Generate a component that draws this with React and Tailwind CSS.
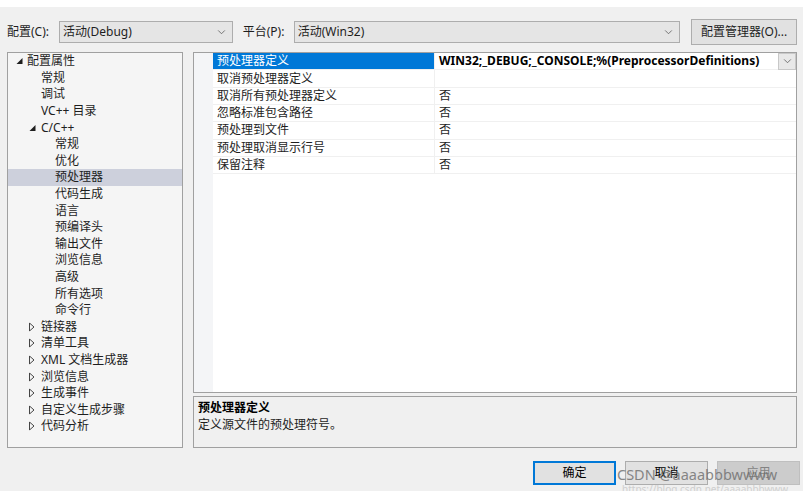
import React from "react";

const FONT = { fontFamily: '"Noto Sans", "Noto Sans CJK SC", sans-serif' };

const treeItems = [
  { label: "配置属性", level: 0, exp: "open" },
  { label: "常规", level: 1 },
  { label: "调试", level: 1 },
  { label: "VC++ 目录", level: 1 },
  { label: "C/C++", level: 1, exp: "open" },
  { label: "常规", level: 2 },
  { label: "优化", level: 2 },
  { label: "预处理器", level: 2, selected: true },
  { label: "代码生成", level: 2 },
  { label: "语言", level: 2 },
  { label: "预编译头", level: 2 },
  { label: "输出文件", level: 2 },
  { label: "浏览信息", level: 2 },
  { label: "高级", level: 2 },
  { label: "所有选项", level: 2 },
  { label: "命令行", level: 2 },
  { label: "链接器", level: 1, exp: "closed" },
  { label: "清单工具", level: 1, exp: "closed" },
  { label: "XML 文档生成器", level: 1, exp: "closed" },
  { label: "浏览信息", level: 1, exp: "closed" },
  { label: "生成事件", level: 1, exp: "closed" },
  { label: "自定义生成步骤", level: 1, exp: "closed" },
  { label: "代码分析", level: 1, exp: "closed" },
];

const props = [
  { name: "预处理器定义", value: "WIN32;_DEBUG;_CONSOLE;%(PreprocessorDefinitions)", active: true },
  { name: "取消预处理器定义", value: "" },
  { name: "取消所有预处理器定义", value: "否" },
  { name: "忽略标准包含路径", value: "否" },
  { name: "预处理到文件", value: "否" },
  { name: "预处理取消显示行号", value: "否" },
  { name: "保留注释", value: "否" },
];

const indent = ["pl-[19px]", "pl-[33px]", "pl-[47px]"];
const arrowLeft = ["left-[8px]", "left-[21px]", "left-[35px]"];

function Chevron({ className = "" }) {
  return (
    <svg viewBox="0 0 10 6" className={`h-[5px] w-[9px] ${className}`} fill="none" stroke="#606060" strokeWidth="1">
      <path d="M1 0.5 5 4.5 9 0.5" />
    </svg>
  );
}

function Expander({ type }) {
  if (type === "open") {
    return (
      <svg viewBox="0 0 7 7" className="h-[7px] w-[7px]">
        <polygon points="6.5,0.5 6.5,6.5 0.5,6.5" fill="#1e1e1e" />
      </svg>
    );
  }
  return (
    <svg viewBox="0 0 6 9" className="h-[9px] w-[6px]" fill="none" stroke="#444" strokeWidth="1">
      <polygon points="0.5,0.5 5,4.5 0.5,8.5" />
    </svg>
  );
}

function Combo({ text, className }) {
  return (
    <div className={`flex h-[22px] items-center justify-between border border-[#adadad] bg-[#e5e5e5] pl-[3px] pr-[6px] ${className}`}>
      <span>{text}</span>
      <Chevron />
    </div>
  );
}

function TreeRow({ item }) {
  return (
    <div
      className={`relative flex h-[16.6px] items-center whitespace-nowrap ${indent[item.level]} ${
        item.selected ? "bg-[#cdd0dc]" : ""
      }`}
    >
      {item.exp && (
        <span className={`absolute top-1/2 flex -translate-y-1/2 items-center ${arrowLeft[item.level]}`}>
          <Expander type={item.exp} />
        </span>
      )}
      {item.label}
    </div>
  );
}

function PropRow({ row }) {
  return (
    <div className="flex h-[17.33px] border-b border-[#f0f0f0]">
      <div
        className={`flex w-[222px] shrink-0 items-center border-r border-[#f0f0f0] pl-[4px] ${
          row.active ? "bg-[#0078d7] text-white" : ""
        }`}
      >
        {row.name}
      </div>
      <div className="flex flex-1 items-center justify-between pl-[4px]">
        <span className={row.active ? "font-bold text-black" : ""}>{row.value}</span>
        {row.active && (
          <div className="flex h-[17px] w-[18px] items-center justify-center border border-[#c8c8c8] bg-[#e8e8e8]">
            <Chevron />
          </div>
        )}
      </div>
    </div>
  );
}

function Button({ children, kind }) {
  const styles = {
    primary: "border-2 border-[#0078d7] bg-[#e1e1e1] text-black",
    normal: "border border-[#adadad] bg-[#e1e1e1] text-black",
    disabled: "border border-[#bfbfbf] bg-[#cccccc] text-[#838383]",
  };
  return (
    <div className={`flex h-[24px] w-[83px] items-center justify-center ${styles[kind]}`}>{children}</div>
  );
}

export default function App() {
  return (
    <div className="relative h-[491px] w-[803px] overflow-hidden bg-[#f0f0f0] text-[12px] text-[#1e1e1e]" style={FONT}>
      <div className="h-[7px] bg-white" />

      <div className="mt-[12px] flex h-[26px] items-center pl-[7px] pr-[6px]">
        <span className="w-[52px]">配置(C):</span>
        <Combo text="活动(Debug)" className="w-[174px]" />
        <span className="ml-[10px] w-[51px]">平台(P):</span>
        <Combo text="活动(Win32)" className="w-[387px]" />
        <div className="ml-[11px] flex h-[26px] w-[106px] items-center justify-center border border-[#adadad] bg-[#e1e1e1]">
          配置管理器(O)...
        </div>
      </div>

      <div className="mt-[7px] flex h-[396px] pl-[7px] pr-[6px]">
        <div className="w-[176px] shrink-0 border border-[#a0a0a0] bg-[#f5f5f5]">
          {treeItems.map((item, i) => (
            <TreeRow key={i} item={item} />
          ))}
        </div>

        <div className="ml-[10px] flex flex-1 flex-col gap-[3px]">
          <div className="flex h-[341px] border border-[#a0a0a0] bg-white">
            <div className="w-[19px] shrink-0 bg-[#f4f5f7]" />
            <div className="flex-1">
              {props.map((row, i) => (
                <PropRow key={i} row={row} />
              ))}
            </div>
          </div>
          <div className="flex-1 border border-[#a0a0a0] bg-[#f0f0f0] px-[4px] pt-[2px]">
            <div className="h-[17px] font-bold text-black">预处理器定义</div>
            <div className="h-[17px]">定义源文件的预处理符号。</div>
          </div>
        </div>
      </div>

      <div className="mt-[13px] flex justify-end gap-[9px] pr-[3px]">
        <Button kind="primary">确定</Button>
        <Button kind="normal">取消</Button>
        <Button kind="disabled">应用</Button>
      </div>

      <div className="pointer-events-none absolute left-[617px] top-[464px] whitespace-nowrap text-[14.5px] leading-[20px] text-[#6e6e6e] opacity-80">
        CSDN @aaaabbbwwww
      </div>
      <div className="pointer-events-none absolute left-[622px] top-[484px] whitespace-nowrap text-[10px] leading-[11px] text-[#b8b8b8] opacity-60">
        https://blog.csdn.net/aaaabbbwww
      </div>
    </div>
  );
}
